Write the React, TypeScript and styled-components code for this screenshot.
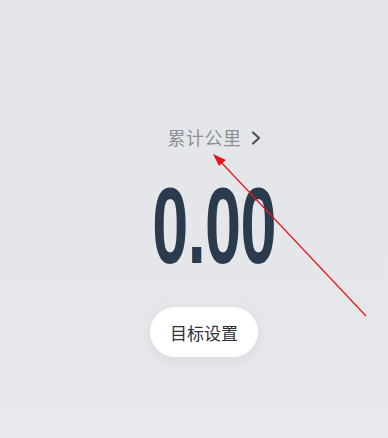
import React from 'react';
import styled, { createGlobalStyle } from 'styled-components';

const GlobalStyle = createGlobalStyle`
  html, body {
    margin: 0;
    padding: 0;
    background: #e5e6ea;
  }
  body {
    font-family: "Noto Sans CJK SC", "Liberation Sans", sans-serif;
  }
`;

const Page = styled.div`
  position: relative;
  width: 388px;
  height: 438px;
  overflow: hidden;
  background: linear-gradient(180deg, #e4e5e9 0%, #e6e7eb 70%, #e8e9ed 100%);
  display: flex;
  flex-direction: column;
  align-items: center;
  padding: 125px 0 0 20px;
  box-sizing: border-box;
`;

const TotalLink = styled.div`
  display: flex;
  align-items: center;
  gap: 9px;
  margin-left: 20px;
  height: 24px;
  font-size: 18px;
  line-height: 24px;
  color: #8b9099;
  letter-spacing: 0.5px;
`;

const Chevron = styled.svg`
  display: block;
  color: #4e535b;
  margin-top: 1px;
`;

const Distance = styled.div`
  margin-top: 23px;
  margin-left: 20px;
  height: 108px;
  font-family: "Liberation Sans", sans-serif;
  font-weight: 700;
  font-size: 108px;
  line-height: 108px;
  color: #2b3b4e;
  transform: scaleX(0.6);
  letter-spacing: -1px;
`;

const GoalButton = styled.button`
  margin-top: 27px;
  width: 108px;
  height: 50px;
  border: 0;
  border-radius: 25px;
  background: #ffffff;
  box-shadow: 0 4px 14px rgba(60, 70, 90, 0.08);
  font-family: "Noto Sans CJK SC", sans-serif;
  font-size: 17px;
  color: #2f3338;
  cursor: pointer;
`;

const Annotation = styled.svg`
  position: absolute;
  left: 0;
  top: 0;
  pointer-events: none;
`;

const App = () => {
  return (
    <>
      <GlobalStyle />
      <Page>
        <TotalLink>
          累计公里
          <Chevron width="10" height="14" viewBox="0 0 10 14">
            <path d="M2 1.5 L8 7 L2 12.5" fill="none" stroke="currentColor" strokeWidth="2.2" strokeLinecap="round" strokeLinejoin="round" />
          </Chevron>
        </TotalLink>
        <Distance>0.00</Distance>
        <GoalButton>目标设置</GoalButton>
        <Annotation width="388" height="438" viewBox="0 0 388 438">
          <line x1="366" y1="316" x2="219" y2="160" stroke="#e8141a" strokeWidth="1.2" />
          <polygon points="213,154 226,160 219,166" fill="#e8141a" />
        </Annotation>
      </Page>
    </>
  );
};

export default App;
